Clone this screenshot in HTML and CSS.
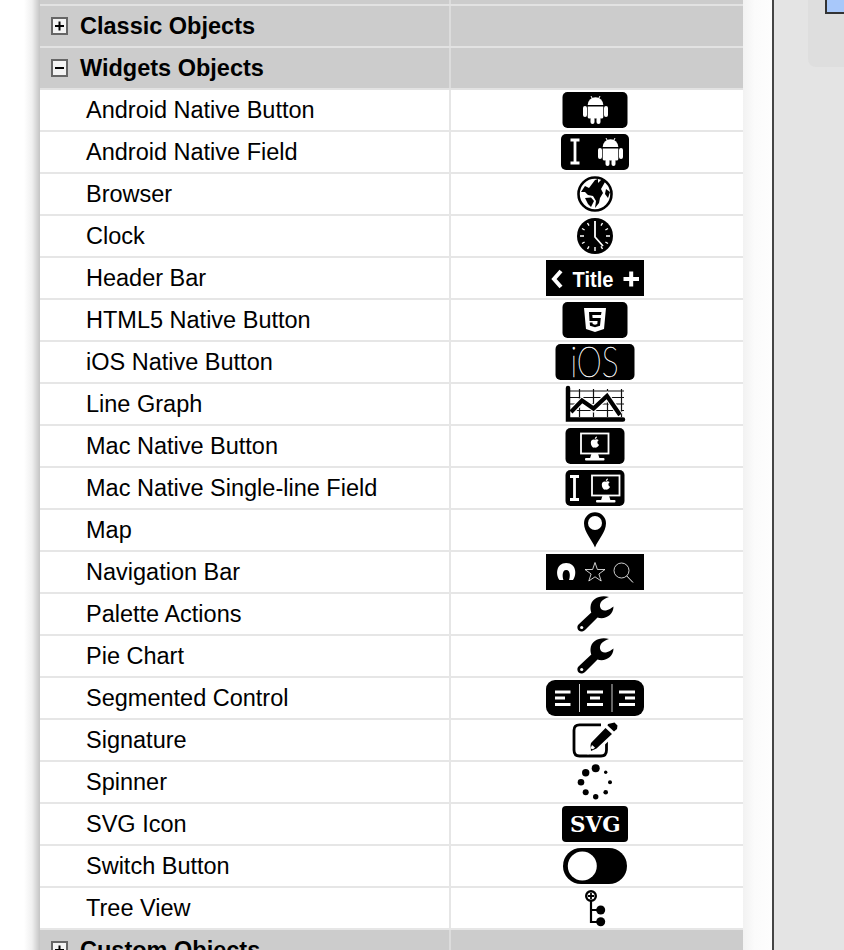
FILE: index.html
```html
<!DOCTYPE html>
<html lang="en">
<head>
  <meta charset="UTF-8">
  <meta name="viewport" content="width=device-width, initial-scale=1.0">
  <title>Widgets Objects</title>
  <link rel="stylesheet" href="styles.css">
</head>
<body>
  <svg class="defs" width="0" height="0">
    <symbol id="android" overflow="visible">
      <path d="M-7.800 -5 A7.800 7.800 0 0 1 7.800 -5 Z" fill="#fff"/>
      <path d="M-4.500 -14 L-3 -11 M4.500 -14 L3 -11" stroke="#fff" stroke-width="1"/>
      <path d="M-7.800 -3.600 H7.800 V7 Q7.800 8.500 6 8.500 H-6 Q-7.800 8.500 -7.800 7 Z" fill="#fff"/>
      <rect x="-12.500" y="-4" width="4" height="11" rx="2" fill="#fff"/>
      <rect x="8.500" y="-4" width="4" height="11" rx="2" fill="#fff"/>
      <rect x="-5" y="7" width="4" height="7" rx="2" fill="#fff"/>
      <rect x="1" y="7" width="4" height="7" rx="2" fill="#fff"/>
    </symbol>
    <symbol id="ibeam" overflow="visible">
      <path d="M-4.500 1 H4.500 M0 1 V24 M-4.500 24 H4.500" stroke="#fff" stroke-width="2.800" fill="none"/>
    </symbol>
    <symbol id="imac" overflow="visible">
      <rect x="1" y="1" width="27.500" height="20" fill="none" stroke="#fff" stroke-width="1.800"/>
      <path d="M11.500 21 H18 L19.500 26 H10 Z" fill="#fff"/>
      <rect x="5" y="25.500" width="19.500" height="2.500" rx="1" fill="#fff"/>
      <path d="M14.700 7.300 C13.500 6.700 10.800 6.900 10.800 10.300 C10.800 13 12.500 15.800 14.700 15 C17 15.800 18.700 13.500 19 12.300 C16.900 11.300 17 8.500 18.800 7.800 C17.600 6.500 15.700 6.800 14.700 7.300 Z M14.800 6.500 C14.800 5 15.700 4.300 17 4 C17 5.500 16.200 6.300 14.800 6.500 Z" fill="#fff"/>
    </symbol>
    <symbol id="wrench" overflow="visible">
      <path d="M64 3 C56 0.500 46 4 45.500 13 C45.400 15.500 45.800 17 46.300 18.500 L33.500 30.500 C31 33 33 38 37 37.500 C38.500 37.300 39.500 36.500 40.500 35.500 L52.500 23.500 C60 26 68.500 21 68.500 12.500 C66 14.500 64 15.500 61 16.500 C58 17 55.500 15.500 55 12.500 C54.500 8 58 5 64 3 Z" fill="#000"/>
      <circle cx="36.700" cy="33.500" r="1.600" fill="#fff"/>
    </symbol>
  </svg>

  <div class="page">
    <div class="gutter"></div>

    <div class="outline">
      <div class="row head stub"><div></div><div class="icon-cell"></div></div>

      <div class="row head">
        <div class="name">
          <svg class="toggle" viewBox="0 0 17 18"><rect x="1" y="1" width="15" height="16" fill="#f3f3f3" stroke="#666" stroke-width="2"/><path d="M4 9 H13 M8.500 4.500 V13.500" stroke="#000" stroke-width="2"/></svg>
          Classic Objects
        </div>
        <div class="icon-cell"></div>
      </div>
      <div class="row head">
        <div class="name">
          <svg class="toggle" viewBox="0 0 17 18"><rect x="1" y="1" width="15" height="16" fill="#f3f3f3" stroke="#666" stroke-width="2"/><path d="M4 9 H13" stroke="#000" stroke-width="2"/></svg>
          Widgets Objects
        </div>
        <div class="icon-cell"></div>
      </div>

      <div class="row">
        <div class="name">Android Native Button</div>
        <div class="icon-cell"><svg class="icon" viewBox="0 0 100 40">
          <rect x="17.500" y="2" width="65" height="36" rx="5"/>
          <use href="#android" x="50.500" y="20"/>
        </svg></div>
      </div>
      <div class="row">
        <div class="name">Android Native Field</div>
        <div class="icon-cell"><svg class="icon" viewBox="0 0 100 40">
          <rect x="16" y="2" width="68" height="36" rx="5"/>
          <use href="#ibeam" x="30" y="7"/>
          <use href="#android" x="65.500" y="20"/>
        </svg></div>
      </div>
      <div class="row">
        <div class="name">Browser</div>
        <div class="icon-cell"><svg class="icon" viewBox="0 0 100 40">
          <circle cx="50" cy="20" r="16.500" fill="#fff" stroke="#000" stroke-width="2.600"/>
          <path d="M36 18 L40 12 L44 14 L47 10 L50 6 L53 5 L53 9 L57 5 L60 8 L56 15 L58 19 L55 24 L54 29 L50 34 L51 27 L48 22 L43 21 L40 18 Z" fill="#000"/>
          <path d="M40 24 L46 23.500 L49 27 L46 33 L43 30 Z" fill="#000"/>
          <path d="M61 15 L65 18 L63 24 L60 20 Z" fill="#000"/>
        </svg></div>
      </div>
      <div class="row">
        <div class="name">Clock</div>
        <div class="icon-cell"><svg class="icon" viewBox="0 0 100 40">
          <circle cx="50" cy="20" r="18"/>
          <path d="M50 31 V35 M35 20 H39 M61 20 H65 M42.500 7 L44 9.600 M57.500 7 L56 9.600 M37 12.500 L39.600 14 M63 12.500 L60.400 14 M37 27.500 L39.600 26 M63 27.500 L60.400 26 M42.500 33 L44 30.400 M57.500 33 L56 30.400" stroke="#fff" stroke-width="1.400"/>
          <path d="M50 5 V21 L58 30" fill="none" stroke="#fff" stroke-width="1.800"/>
        </svg></div>
      </div>
      <div class="row">
        <div class="name">Header Bar</div>
        <div class="icon-cell"><svg class="icon" viewBox="0 0 100 40">
          <rect x="1" y="2" width="98" height="36"/>
          <path d="M16 13 L9 21 L16 29" fill="none" stroke="#fff" stroke-width="4"/>
          <text class="bar-title" x="27.500" y="29" textLength="41" lengthAdjust="spacingAndGlyphs">Title</text>
          <path d="M78.500 21 H94 M86.200 13.500 V28.500" stroke="#fff" stroke-width="4"/>
        </svg></div>
      </div>
      <div class="row">
        <div class="name">HTML5 Native Button</div>
        <div class="icon-cell"><svg class="icon" viewBox="0 0 100 40">
          <rect x="17.500" y="2" width="65" height="36" rx="5"/>
          <path d="M39 8 H61 L59 29 L50 32 L41 29 Z" fill="#fff"/>
          <path d="M44 12 H56.500 L56 15 H47.300 L47.600 18 H55.800 L55 25.800 L50 27.300 L45 25.800 L44.700 22.500 H47.500 L47.700 24 L50 24.700 L52.300 24 L52.600 21 H44.500 Z" fill="#000"/>
        </svg></div>
      </div>
      <div class="row">
        <div class="name">iOS Native Button</div>
        <div class="icon-cell"><svg class="icon" viewBox="0 0 100 40">
          <rect x="10.500" y="2" width="79" height="36" rx="5"/>
          <text class="ios-label" x="25.500" y="35" textLength="48" lengthAdjust="spacingAndGlyphs">iOS</text>
        </svg></div>
      </div>
      <div class="row">
        <div class="name">Line Graph</div>
        <div class="icon-cell"><svg class="icon" viewBox="0 0 100 40">
          <path d="M23 7 H79 M23 13.500 H79 M23 20 H79 M23 26.500 H79 M34.500 5 V33 M48.500 5 V33 M62.500 5 V33 M76.500 5 V33" fill="none" stroke="#111" stroke-width="1.200"/>
          <path d="M26 28 L37 16.500 L48.500 24.500 L62 12 L75 31" fill="none" stroke="#fff" stroke-width="6.500"/>
          <path d="M26 28 L37 16.500 L48.500 24.500 L62 12 L75 31" fill="none" stroke="#000" stroke-width="4.200"/>
          <path d="M23 4 V35.500 H78" fill="none" stroke="#000" stroke-width="4.500" stroke-linecap="round"/>
        </svg></div>
      </div>
      <div class="row">
        <div class="name">Mac Native Button</div>
        <div class="icon-cell"><svg class="icon" viewBox="0 0 100 40">
          <rect x="20.500" y="2" width="59" height="36" rx="5"/>
          <use href="#imac" x="35" y="6.500"/>
        </svg></div>
      </div>
      <div class="row">
        <div class="name">Mac Native Single-line Field</div>
        <div class="icon-cell"><svg class="icon" viewBox="0 0 100 40">
          <rect x="20.500" y="2" width="59" height="36" rx="5"/>
          <use href="#ibeam" x="29.500" y="7.500"/>
          <use href="#imac" x="46" y="6.500"/>
        </svg></div>
      </div>
      <div class="row">
        <div class="name">Map</div>
        <div class="icon-cell"><svg class="icon" viewBox="0 0 100 40">
          <path d="M50 37.500 C47 30 39 22 39 13.300 A11 11 0 0 1 61 13.300 C61 22 53 30 50 37.500 Z"/>
          <circle cx="50" cy="13" r="7" fill="#fff"/>
        </svg></div>
      </div>
      <div class="row">
        <div class="name">Navigation Bar</div>
        <div class="icon-cell"><svg class="icon" viewBox="0 0 100 40">
          <rect x="1" y="2" width="98" height="36"/>
          <path d="M14.500 28 C10.500 23 11 11 21.200 11 C31.500 11 32 23 28 28 H24 C25 26 26 18 21.200 18 C16.500 18 17.500 26 18.500 28 Z" fill="#fff"/>
          <path d="M50 10.500 L52.400 17.500 L60 17.500 L53.900 22 L56.200 29 L50 24.800 L43.800 29 L46.100 22 L40 17.500 L47.600 17.500 Z" fill="none" stroke="#fff" stroke-width="0.800"/>
          <circle cx="76.500" cy="18.500" r="7.500" fill="none" stroke="#fff" stroke-width="0.800"/>
          <path d="M81.800 24 L88 30.500" stroke="#fff" stroke-width="1"/>
        </svg></div>
      </div>
      <div class="row">
        <div class="name">Palette Actions</div>
        <div class="icon-cell"><svg class="icon" viewBox="0 0 100 40"><use href="#wrench"/></svg></div>
      </div>
      <div class="row">
        <div class="name">Pie Chart</div>
        <div class="icon-cell"><svg class="icon" viewBox="0 0 100 40"><use href="#wrench"/></svg></div>
      </div>
      <div class="row">
        <div class="name">Segmented Control</div>
        <div class="icon-cell"><svg class="icon" viewBox="0 0 100 40">
          <rect x="1" y="2" width="98" height="36" rx="9"/>
          <path d="M34.500 6 V34 M67 6 V34" stroke="#ccc" stroke-width="1"/>
          <path d="M10 14 H25.500 M10 20 H20 M10 26.500 H25.500" stroke="#fff" stroke-width="3"/>
          <path d="M42 14 H58 M45 20 H55 M42 26.500 H58" stroke="#fff" stroke-width="3"/>
          <path d="M74 14 H90 M80 20 H90 M74 26.500 H90" stroke="#fff" stroke-width="3"/>
        </svg></div>
      </div>
      <div class="row">
        <div class="name">Signature</div>
        <div class="icon-cell"><svg class="icon" viewBox="0 0 100 40">
          <path d="M56 4.800 H34.500 Q29 4.800 29 10.300 V30 Q29 36 34.500 36 H56 Q61.500 36 61.500 30 V19" fill="none" stroke="#000" stroke-width="2.800"/>
          <path d="M60.500 3.500 L72.500 3 L72.800 12.500 L52.500 31.500 L42.500 34.500 L44 24.500 Z" fill="#fff"/>
          <path d="M63 4 L69.500 2.500 L72.500 5.500 L72 9 L69 11.500 L62.500 5.500 Z M60.500 8 L67 14 L51.500 28.500 L46 31 L45.500 25.500 L46 23 Z" fill="#000"/>
          <path d="M47 25 L50 27.500 L48 29.200 L45.500 28.500 Z" fill="#fff"/>
        </svg></div>
      </div>
      <div class="row">
        <div class="name">Spinner</div>
        <div class="icon-cell"><svg class="icon" viewBox="0 0 100 40">
          <circle cx="50.700" cy="6.300" r="4"/>
          <circle cx="40.700" cy="10.700" r="3.700"/>
          <circle cx="36" cy="20.300" r="3.300"/>
          <circle cx="40.700" cy="30.300" r="3"/>
          <circle cx="50.700" cy="34.700" r="2.700"/>
          <circle cx="60.700" cy="30.300" r="2.300"/>
          <circle cx="65" cy="20.300" r="2"/>
          <circle cx="60.700" cy="10.300" r="1.700"/>
        </svg></div>
      </div>
      <div class="row">
        <div class="name">SVG Icon</div>
        <div class="icon-cell"><svg class="icon" viewBox="0 0 100 40">
          <rect x="17" y="2" width="66" height="36" rx="4"/>
          <text class="svg-label" x="25" y="28">SVG</text>
        </svg></div>
      </div>
      <div class="row">
        <div class="name">Switch Button</div>
        <div class="icon-cell"><svg class="icon" viewBox="0 0 100 40">
          <rect x="18" y="2" width="64" height="36" rx="18"/>
          <circle cx="37.300" cy="20" r="14.500" fill="#fff"/>
        </svg></div>
      </div>
      <div class="row">
        <div class="name">Tree View</div>
        <div class="icon-cell"><svg class="icon" viewBox="0 0 100 40">
          <path d="M46 13 V34 H52 M46 22 H52" fill="none" stroke="#000" stroke-width="2.200"/>
          <circle cx="46" cy="8" r="4.800" fill="#fff" stroke="#000" stroke-width="2.400"/>
          <path d="M43 8 H49 M46 5 V11" stroke="#000" stroke-width="1.800"/>
          <circle cx="55.700" cy="22" r="4.500"/>
          <circle cx="55.700" cy="33.700" r="4.500"/>
        </svg></div>
      </div>

      <div class="row head">
        <div class="name">
          <svg class="toggle" viewBox="0 0 17 18"><rect x="1" y="1" width="15" height="16" fill="#f3f3f3" stroke="#666" stroke-width="2"/><path d="M4 9 H13 M8.500 4.500 V13.500" stroke="#000" stroke-width="2"/></svg>
          Custom Objects
        </div>
        <div class="icon-cell"></div>
      </div>
    </div>

    <div class="side-gap"></div>

    <div class="inspector">
      <div class="inspector-card">
        <div class="swatch"></div>
      </div>
    </div>
  </div>
</body>
</html>
```

FILE: styles.css
```css
* {
  margin: 0;
  padding: 0;
  box-sizing: border-box;
}
html, body {
  height: 100%;
  overflow: hidden;
}
body {
  font-family: "Liberation Sans", Arial, sans-serif;
  background-color: #fff;
  color: #000;
}
.defs {
  position: absolute;
}
.page {
  display: flex;
  height: 950px;
  overflow: hidden;
}
.gutter {
  width: 40px;
  flex-shrink: 0;
  background: linear-gradient(to right, #fff 60%, #f0f0f0 80%, #c4c4c4 100%);
}
.outline {
  width: 703px;
  flex-shrink: 0;
  background-color: #fff;
}
.side-gap {
  width: 29px;
  flex-shrink: 0;
  background: linear-gradient(to right, #f2f2f2, #fbfbfb 40%, #fdfdfd);
}
.row {
  display: grid;
  grid-template-columns: 409px 1fr;
  height: 42px;
  border-bottom: 2px solid #e6e6e6;
}
.row .name {
  display: flex;
  align-items: center;
  padding-left: 46px;
  font-size: 23.5px;
  padding-top: 1px;
}
.head {
  background-color: #cccccc;
  border-bottom-color: #e2e2e2;
}
.head .name {
  padding-left: 11px;
  gap: 12px;
  font-weight: bold;
  padding-top: 0;
}
.stub {
  height: 6px;
}
.toggle {
  width: 17px;
  height: 18px;
  flex-shrink: 0;
}
.icon-cell {
  border-left: 2px solid #e6e6e6;
  padding-left: 94px;
}
.head .icon-cell {
  border-left-color: #dcdcdc;
}
.icon {
  display: block;
  width: 100px;
  height: 40px;
  overflow: visible;
}
.bar-title {
  font-family: "Liberation Sans", Arial, sans-serif;
  font-size: 22px;
  font-weight: bold;
  fill: #fff;
}
.ios-label {
  font-family: Lato, "Open Sans", sans-serif;
  font-size: 42px;
  font-weight: 100;
  fill: #fff;
  stroke: #fff;
  stroke-width: 0.4px;
}
.svg-label {
  font-family: "DejaVu Serif", "Liberation Serif", serif;
  font-size: 21.5px;
  font-weight: bold;
  fill: #fff;
}
.inspector {
  flex: 1;
  background-color: #e4e4e4;
  border-left: 2px solid #444;
  padding-left: 34px;
}
.inspector-card {
  height: 67px;
  background-color: #dedede;
  border-radius: 0 0 0 8px;
  padding-left: 17px;
}
.swatch {
  height: 14px;
  background-color: #a8c8fa;
  border: 2px solid #333;
  border-top: none;
  border-right: none;
}
```
